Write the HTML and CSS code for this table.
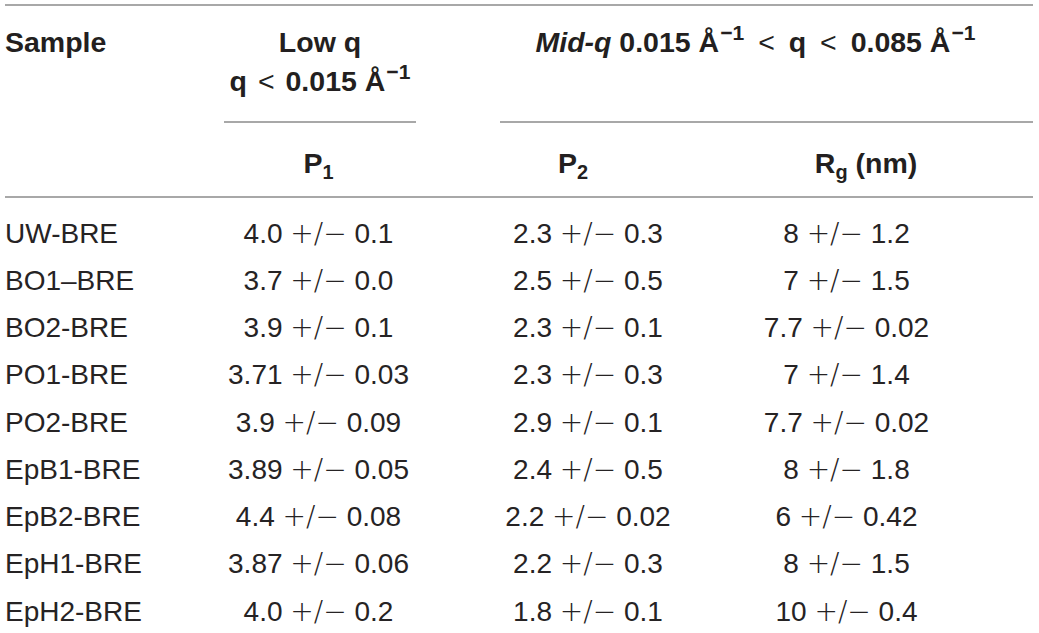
FILE: index.html
```html
<!DOCTYPE html>
<html lang="en">
<head>
    <meta charset="UTF-8">
    <title>SAXS Fit Parameters</title>
    <link rel="stylesheet" href="styles.css">
</head>
<body>
    <div class="page">
        <div class="table-head">
            <div class="cell sample">Sample</div>
            <div class="cell low">
                <div>Low q</div>
                <div>q <span class="lt">&lt;</span> 0.015 Å<sup>−1</sup></div>
            </div>
            <div class="cell mid"><i>Mid-q</i> 0.015 Å<sup>−1</sup> <span class="lt">&lt;</span> q <span class="lt">&lt;</span> 0.085 Å<sup>−1</sup></div>
            <div class="cell sub p1">P<sub>1</sub></div>
            <div class="cell sub p2">P<sub>2</sub></div>
            <div class="cell sub rg">R<sub>g</sub> (nm)</div>
        </div>

        <div class="table-body">
            <div class="name">UW-BRE</div><div class="val">4.0 <span class="pm">+/−</span> 0.1</div><div class="val">2.3 <span class="pm">+/−</span> 0.3</div><div class="val">8 <span class="pm">+/−</span> 1.2</div>
            <div class="name">BO1–BRE</div><div class="val">3.7 <span class="pm">+/−</span> 0.0</div><div class="val">2.5 <span class="pm">+/−</span> 0.5</div><div class="val">7 <span class="pm">+/−</span> 1.5</div>
            <div class="name">BO2-BRE</div><div class="val">3.9 <span class="pm">+/−</span> 0.1</div><div class="val">2.3 <span class="pm">+/−</span> 0.1</div><div class="val">7.7 <span class="pm">+/−</span> 0.02</div>
            <div class="name">PO1-BRE</div><div class="val">3.71 <span class="pm">+/−</span> 0.03</div><div class="val">2.3 <span class="pm">+/−</span> 0.3</div><div class="val">7 <span class="pm">+/−</span> 1.4</div>
            <div class="name">PO2-BRE</div><div class="val">3.9 <span class="pm">+/−</span> 0.09</div><div class="val">2.9 <span class="pm">+/−</span> 0.1</div><div class="val">7.7 <span class="pm">+/−</span> 0.02</div>
            <div class="name">EpB1-BRE</div><div class="val">3.89 <span class="pm">+/−</span> 0.05</div><div class="val">2.4 <span class="pm">+/−</span> 0.5</div><div class="val">8 <span class="pm">+/−</span> 1.8</div>
            <div class="name">EpB2-BRE</div><div class="val">4.4 <span class="pm">+/−</span> 0.08</div><div class="val">2.2 <span class="pm">+/−</span> 0.02</div><div class="val">6 <span class="pm">+/−</span> 0.42</div>
            <div class="name">EpH1-BRE</div><div class="val">3.87 <span class="pm">+/−</span> 0.06</div><div class="val">2.2 <span class="pm">+/−</span> 0.3</div><div class="val">8 <span class="pm">+/−</span> 1.5</div>
            <div class="name">EpH2-BRE</div><div class="val">4.0 <span class="pm">+/−</span> 0.2</div><div class="val">1.8 <span class="pm">+/−</span> 0.1</div><div class="val">10 <span class="pm">+/−</span> 0.4</div>
        </div>
    </div>
</body>
</html>
```

FILE: styles.css
```css
/* General Reset and Font */
* {
    margin: 0;
    padding: 0;
    box-sizing: border-box;
}

body {
    background-color: #fff;
    color: #262324;
    font-family: "Liberation Sans", Arial, sans-serif;
    font-size: 28px;
}

.page {
    width: 1028px;
    margin-left: 5px;
    padding-top: 4px;
}

/* Header rows */
.table-head {
    display: grid;
    grid-template-columns: 205px 217px 322px 195px 89px;
    border-top: 2px solid #a8a8a8;
    font-weight: bold;
    font-size: 28.5px;
    line-height: 38.5px;
    color: #231f20;
}

.sample {
    grid-column: 1;
    grid-row: 1 / 3;
    padding-top: 17px;
    border-bottom: 2px solid #a8a8a8;
}

.low {
    grid-column: 2;
    grid-row: 1;
    margin: 0 11px 0 14px;
    padding: 17px 0 21px;
    text-align: center;
    border-bottom: 2px solid #a8a8a8;
}

.mid {
    grid-column: 3 / 6;
    grid-row: 1;
    margin-left: 73px;
    padding: 17px 22px 0 0;
    text-align: center;
    border-bottom: 2px solid #a8a8a8;
}

.mid .lt {
    margin: 0 6px;
}

.sub {
    grid-row: 2;
    padding: 21px 0 13px;
    text-align: center;
    border-bottom: 2px solid #a8a8a8;
}

.p1 {
    grid-column: 2;
}

.p2 {
    grid-column: 3;
    padding-right: 30px;
}

.rg {
    grid-column: 4 / 6;
    padding-right: 50px;
}

.lt {
    font-weight: normal;
    margin: 0 3px;
}

sup {
    font-size: 0.74em;
    line-height: 0;
    vertical-align: 0.55em;
    margin-left: 1px;
}

sub {
    font-size: 0.7em;
    line-height: 0;
    vertical-align: -0.3em;
}

/* Data rows */
.table-body {
    display: grid;
    grid-template-columns: 205px 217px 322px 195px;
    padding-top: 12px;
    line-height: 47.25px;
}

.val {
    text-align: center;
    white-space: nowrap;
}

.pm {
    font-family: "DejaVu Sans", sans-serif;
    font-weight: 200;
}
```
